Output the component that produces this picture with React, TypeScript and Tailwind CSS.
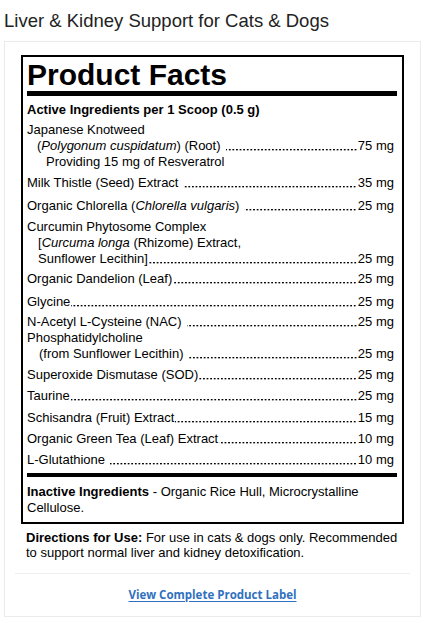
import React from 'react';

type Entry = {
  lead?: React.ReactNode[]; // lines above the dotted line
  name: React.ReactNode;
  indent?: string;
  amount: string;
  after?: React.ReactNode;
  space?: boolean;
  mt: string;
};

const entries: Entry[] = [
  {
    lead: ['Japanese Knotweed'],
    name: (
      <>
        (<i>Polygonum cuspidatum</i>) (Root)
      </>
    ),
    indent: 'pl-[10px]',
    amount: '75 mg',
    after: <div className="pl-[19px]">Providing 15 mg of Resveratrol</div>,
    space: true,
    mt: 'mt-[4px]',
  },
  { name: 'Milk Thistle (Seed) Extract', amount: '35 mg', space: true, mt: 'mt-[5px]' },
  {
    name: (
      <>
        Organic Chlorella (<i>Chlorella vulgaris</i>)
      </>
    ),
    amount: '25 mg',
    space: true,
    mt: 'mt-[7px]',
  },
  {
    lead: [
      'Curcumin Phytosome Complex',
      <div className="pl-[11px]">
        [<i>Curcuma longa</i> (Rhizome) Extract,
      </div>,
    ],
    name: 'Sunflower Lecithin]',
    indent: 'pl-[11px]',
    amount: '25 mg',
    mt: 'mt-[5px]',
  },
  { name: 'Organic Dandelion (Leaf)', amount: '25 mg', mt: 'mt-[4px]' },
  { name: 'Glycine', amount: '25 mg', mt: 'mt-[7px]' },
  { name: 'N-Acetyl L-Cysteine (NAC)', amount: '25 mg', space: true, mt: 'mt-[4px]' },
  {
    lead: ['Phosphatidylcholine'],
    name: '(from Sunflower Lecithin)',
    indent: 'pl-[12px]',
    amount: '25 mg',
    space: true,
    mt: 'mt-0',
  },
  { name: 'Superoxide Dismutase (SOD)', amount: '25 mg', mt: 'mt-[5px]' },
  { name: 'Taurine', amount: '25 mg', mt: 'mt-[5px]' },
  { name: 'Schisandra (Fruit) Extract', amount: '15 mg', mt: 'mt-[6px]' },
  { name: 'Organic Green Tea (Leaf) Extract', amount: '10 mg', mt: 'mt-[5px]' },
  { name: 'L-Glutathione', amount: '10 mg', space: true, mt: 'mt-[5px]' },
];

function Row({ e }: { e: Entry }) {
  return (
    <div className={e.mt}>
      {e.lead?.map((l, i) => (
        <div key={i}>{l}</div>
      ))}
      <div className={`flex pr-[3px] ${e.indent ?? ''}`}>
        <span className="shrink-0 whitespace-nowrap">{e.name}</span>
        {/* dotted leader */}
        <span className={`flex-1 min-w-0 ${e.space ? 'ml-[5px]' : 'ml-[1px]'} mr-[1px] bg-[radial-gradient(circle_at_50%_11.6px,#000_0.75px,transparent_1.15px)] bg-[length:3.6px_16px] bg-repeat-x bg-right`} />
        <span className="shrink-0 whitespace-nowrap">{e.amount}</span>
      </div>
      {e.after}
    </div>
  );
}

export default function App() {
  return (
    <div className="w-[425px] min-h-[623px] bg-white px-[4px] font-['Liberation_Sans',Arial,sans-serif]">
      <h1 className="pt-[9px] text-[18.5px] leading-[24px] text-[#222]">
        Liver &amp; Kidney Support for Cats &amp; Dogs
      </h1>

      <div className="mt-[8px] border border-[#ebebeb] px-4 pt-[13px] pb-[13px]">
        {/* Product Facts box */}
        <div className="border-2 border-black pl-[4px] pr-[5px] pb-[6px] text-[13px] leading-[16px] text-black">
          <div className="pt-[3px] text-[30px] leading-[30px] font-bold">Product Facts</div>
          <div className="mt-[1px] h-[5px] bg-black" />
          <div className="mt-[6px] font-bold">Active Ingredients per 1 Scoop (0.5 g)</div>

          {entries.map((e, i) => (
            <Row key={i} e={e} />
          ))}

          <div className="mt-[5px] h-[4px] bg-black" />
          <p className="mt-[7px]">
            <b>Inactive Ingredients</b> - Organic Rice Hull, Microcrystalline Cellulose.
          </p>
        </div>

        <p className="mt-[6px] px-[5px] text-[13px] leading-[15px] text-black">
          <b>Directions for Use:</b> For use in cats &amp; dogs only. Recommended to support normal liver and
          kidney detoxification.
        </p>

        <div className="mt-[13px] -mx-[6px] h-px bg-[#eeeef2]" />

        <div className="mt-[12px] text-center leading-[16px]">
          <a
            href="#"
            className="font-['Open_Sans',sans-serif] text-[11.5px] font-bold text-[#3070bf] underline decoration-[#3070bf] underline-offset-[2px]"
          >
            View Complete Product Label
          </a>
        </div>
      </div>
    </div>
  );
}
